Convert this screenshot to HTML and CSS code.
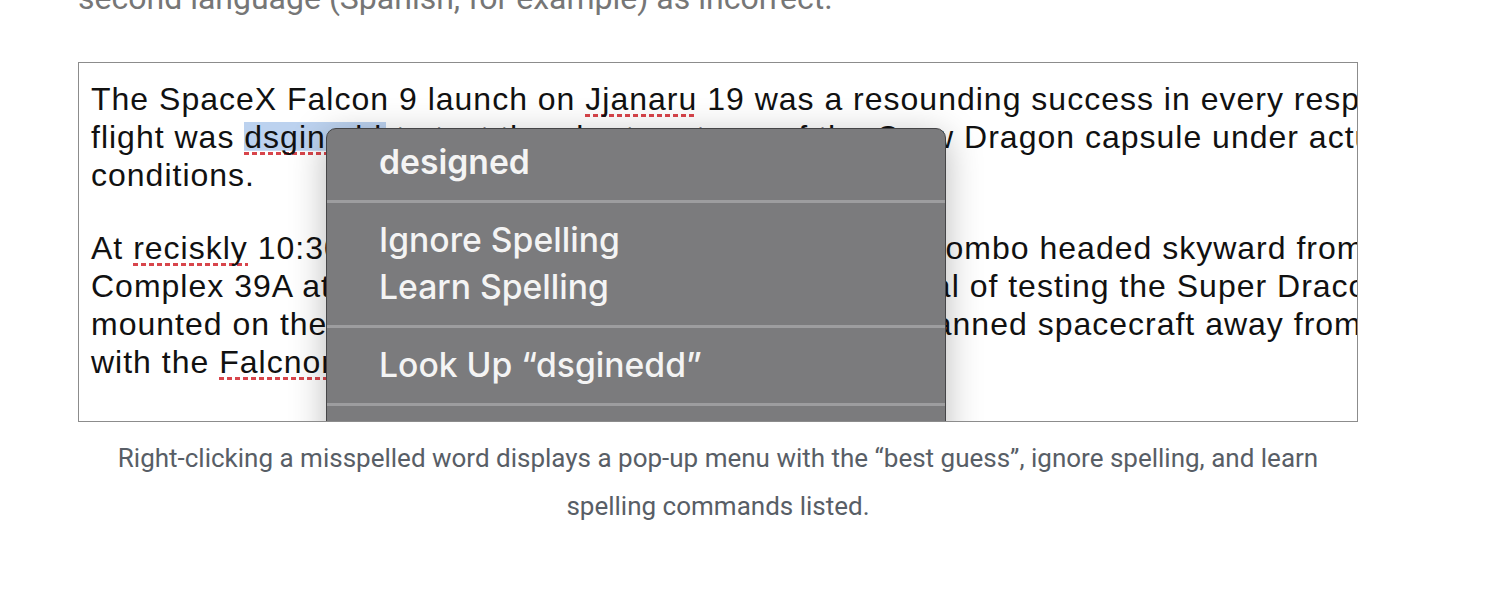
FILE: index.html
```html
<!DOCTYPE html>
<html lang="en">
<head>
    <meta charset="UTF-8">
    <meta name="viewport" content="width=device-width, initial-scale=1.0">
    <title>Spell checking</title>
    <link rel="stylesheet" href="styles.css">
</head>
<body>
    <div class="article">
        <p class="lead">second language (Spanish, for example) as incorrect.</p>

        <figure class="shot">
            <div class="doc">
                <div class="doc-para">
                    <div class="doc-line">The SpaceX Falcon 9 launch on <span class="typo">Jjanaru</span> 19 was a resounding success in every respect. The</div>
                    <div class="doc-line">flight was <span class="typo picked">dsginedd</span> to test the abort systems of the Crew Dragon capsule under actual flight</div>
                    <div class="doc-line">conditions.</div>
                </div>
                <div class="doc-para">
                    <div class="doc-line">At <span class="typo">reciskly</span> 10:30 am EST a Falcon 9 and Crew Dragon combo headed skyward from Launch</div>
                    <div class="doc-line">Complex 39A at the Kennedy Space Center, with the goal of testing the Super Draco engines</div>
                    <div class="doc-line">mounted on the capsule, which are made to carry the manned spacecraft away from the rocket</div>
                    <div class="doc-line">with the <span class="typo">Falcnon</span> 9 rocket in case of an emergency.</div>
                </div>
            </div>

            <!-- context menu over the misspelled word -->
            <div class="menu">
                <div class="menu-group first">
                    <div class="menu-item best">designed</div>
                </div>
                <div class="menu-group">
                    <div class="menu-item">Ignore Spelling</div>
                    <div class="menu-item">Learn Spelling</div>
                </div>
                <div class="menu-group">
                    <div class="menu-item">Look Up “dsginedd”</div>
                </div>
                <div class="menu-group">
                    <div class="menu-item">Search with Google</div>
                </div>
            </div>
        </figure>

        <p class="caption">Right-clicking a misspelled word displays a pop-up menu with the “best guess”, ignore spelling, and learn spelling commands listed.</p>
    </div>
</body>
</html>
```

FILE: styles.css
```css
body {
    margin: 0;
    background: #fff;
    font-family: Roboto, 'Liberation Sans', sans-serif;
    overflow: hidden;
}
.article {
    width: 1280px;
    margin-left: 78px;
}
.lead {
    margin: -26px 0 0;
    font-size: 32px;
    line-height: 48px;
    color: #767676;
}
.shot {
    position: relative;
    margin: 40px 0 0;
    height: 358px;
    border: 1px solid #8c8c8c;
    background: #fff;
    overflow: hidden;
}
.doc {
    padding: 17px 0 0 12px;
    font-family: 'Liberation Sans', Arial, sans-serif;
    font-size: 32px;
    letter-spacing: 1px;
    line-height: 38px;
    color: #111;
}
.doc-para {
    margin-bottom: 35px;
}
.doc-line {
    white-space: nowrap;
}
.typo {
    background: repeating-linear-gradient(to right, #d8454b 0 5px, transparent 5px 8px) left bottom / 100% 3px no-repeat;
}
.typo.picked {
    padding-right: 4px;
    background:
        repeating-linear-gradient(to right, #d8454b 0 5px, transparent 5px 8px) left bottom / 100% 3px no-repeat,
        linear-gradient(#bcd2ef, #bcd2ef) left 3px / 100% 80% no-repeat;
}
.menu {
    position: absolute;
    left: 247px;
    top: 65px;
    width: 618px;
    height: 360px;
    background: #7b7b7d;
    border: 1px solid #454547;
    border-radius: 10px;
    box-shadow: 0 8px 36px rgba(0, 0, 0, 0.28);
    font-family: Inter, 'Noto Sans', sans-serif;
    font-size: 33.7px;
    font-weight: 500;
    color: #f4f4f4;
}
.menu-group {
    padding: 13px 0 15px;
    border-bottom: 3px solid #9d9d9f;
}
.menu-group.first {
    padding-top: 9px;
}
.menu-item {
    padding-left: 52px;
    line-height: 47px;
}
.menu-item.best {
    font-weight: 600;
}
.caption {
    margin: 12px 0 0;
    padding: 0 30px;
    text-align: center;
    font-size: 26px;
    line-height: 48px;
    color: #585e66;
}
```
